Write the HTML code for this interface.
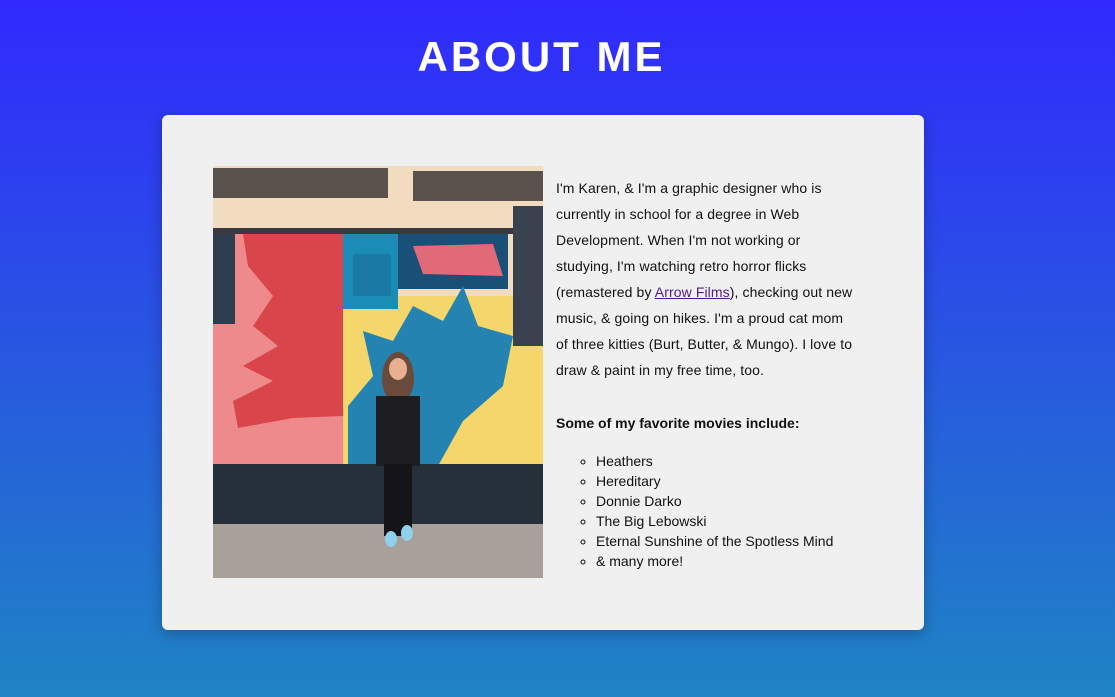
<!DOCTYPE html>
<html><head><style>
html,body{margin:0;padding:0}
body{width:1115px;height:697px;overflow:hidden;background:linear-gradient(#3129fe,#1f84c4);font-family:"Liberation Sans",sans-serif;position:relative}
h1{position:absolute;left:0;width:1083px;margin:0;top:33px;text-align:center;color:#fff;font-size:42px;font-weight:bold;letter-spacing:3px}
.card{position:absolute;left:162px;top:115px;width:762px;height:515px;background:#f0f0f0;border-radius:6px;box-shadow:0 4px 14px rgba(0,0,0,.25)}
svg.ph{position:absolute;left:51px;top:51px}
.txt{position:absolute;left:394px;top:60px;font-size:14px;line-height:26px;color:#111;white-space:nowrap;letter-spacing:0.1px}
.txt a{color:#551a8b}
.h{position:absolute;left:394px;top:300px;font-size:14px;font-weight:bold;color:#111}
ul{position:absolute;left:394px;top:336px;margin:0;padding:0 0 0 40px;list-style:circle;font-size:14px;line-height:20px;color:#111}
</style></head><body>
<h1>ABOUT ME</h1>
<div class="card">
<svg class="ph" width="330" height="412" viewBox="0 0 330 412">
<rect width="330" height="412" fill="#f2dcc0"/>
<rect x="0" y="2" width="175" height="30" fill="#5a524c"/>
<rect x="200" y="5" width="130" height="30" fill="#5a524c"/>
<rect x="0" y="62" width="330" height="6" fill="#3a3a40"/>
<rect x="0" y="68" width="130" height="235" fill="#ef8a8c"/>
<path d="M30 68 L130 68 L130 250 L80 252 L25 262 L20 235 L60 215 L30 200 L65 180 L40 160 L60 130 L35 100 Z" fill="#d8454a"/>
<rect x="130" y="68" width="55" height="75" fill="#1a8cb5"/>
<rect x="140" y="88" width="38" height="48" fill="#1a7aa5"/>
<rect x="185" y="68" width="110" height="55" fill="#1a4f78"/>
<path d="M200 80 L280 78 L290 110 L210 108 Z" fill="#e06a78"/>
<rect x="130" y="130" width="200" height="170" fill="#f5d66a"/>
<rect x="130" y="130" width="55" height="13" fill="#1a8cb5"/>
<path d="M135 240 L160 210 L150 165 L180 175 L200 140 L230 155 L250 120 L265 160 L300 170 L290 220 L250 255 L225 300 L135 300 Z" fill="#2483b0"/>
<rect x="300" y="40" width="30" height="140" fill="#3a4250"/>
<rect x="0" y="68" width="22" height="90" fill="#2e3e50"/>
<rect x="0" y="298" width="330" height="62" fill="#25303a"/>
<rect x="0" y="358" width="330" height="54" fill="#aaa09a"/>
<ellipse cx="185" cy="212" rx="16" ry="26" fill="#6a4a3a"/>
<rect x="163" y="230" width="44" height="70" fill="#1e1e22"/>
<rect x="171" y="298" width="28" height="72" fill="#151518"/>
<ellipse cx="185" cy="203" rx="9" ry="11" fill="#e8b090"/>
<ellipse cx="178" cy="373" rx="6" ry="8" fill="#8fd0ec"/>
<ellipse cx="194" cy="367" rx="6" ry="8" fill="#8fd0ec"/>
</svg>
<div class="txt">I'm Karen, &amp; I'm a graphic designer who is<br>currently in school for a degree in Web<br>Development. When I'm not working or<br>studying, I'm watching retro horror flicks<br>(remastered by <a href="#">Arrow Films</a>), checking out new<br>music, &amp; going on hikes. I'm a proud cat mom<br>of three kitties (Burt, Butter, &amp; Mungo). I love to<br>draw &amp; paint in my free time, too.</div>
<div class="h">Some of my favorite movies include:</div>
<ul><li>Heathers</li><li>Hereditary</li><li>Donnie Darko</li><li>The Big Lebowski</li><li>Eternal Sunshine of the Spotless Mind</li><li>&amp; many more!</li></ul>
</div>
</body></html>
